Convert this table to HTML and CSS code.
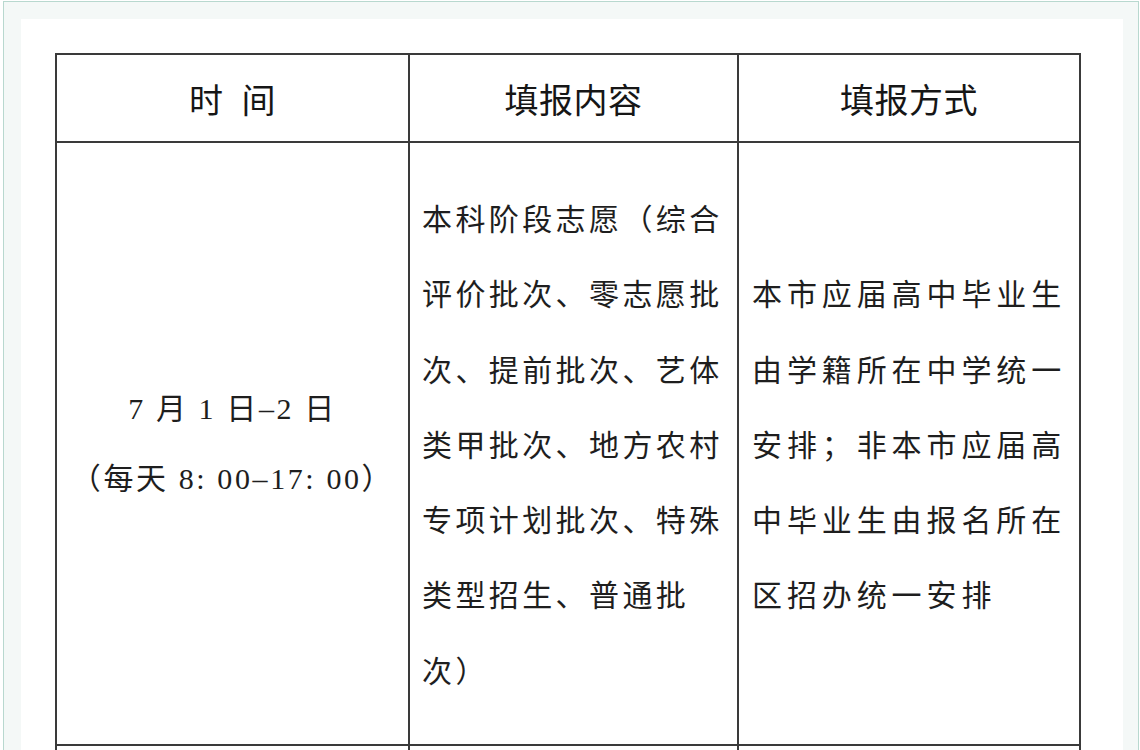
FILE: index.html
```html
<!DOCTYPE html>
<html lang="zh-CN">
<head>
<meta charset="utf-8">
<title>填报时间</title>
<link rel="stylesheet" href="styles.css">
</head>
<body>
<div class="frame">
  <div class="paper">
    <table class="sched">
      <colgroup>
        <col class="c1"><col class="c2"><col class="c3">
      </colgroup>
      <thead>
        <tr class="head">
          <th><span class="gap">时</span>间</th>
          <th>填报内容</th>
          <th>填报方式</th>
        </tr>
      </thead>
      <tbody>
        <tr class="main">
          <td class="time">
            <div class="tline">7 月 1 日–2 日</div>
            <div class="tline">（每天 8: 00–17: 00）</div>
          </td>
          <td class="content">本科阶段志愿（综合<br>评价批次、零志愿批<br>次、提前批次、艺体<br>类甲批次、地方农村<br>专项计划批次、特殊<br>类型招生、普通批<br>次）</td>
          <td class="method">本市应届高中毕业生<br>由学籍所在中学统一<br>安排；非本市应届高<br>中毕业生由报名所在<br>区招办统一安排</td>
        </tr>
        <tr class="next">
          <td></td><td></td><td></td>
        </tr>
      </tbody>
    </table>
  </div>
</div>
</body>
</html>
```

FILE: styles.css
```css
html, body {
  margin: 0;
  padding: 0;
  height: 750px;
  overflow: hidden;
  background: #ffffff;
}

.frame {
  margin: 1px 1px 0 3px;
  border: 1px solid #b8d8cf;
  border-bottom: none;
  background: #f4f8f7;
  padding: 17px 15px 0 17px;
  height: 760px;
}

.paper {
  background: #ffffff;
  padding: 34px 41px 0 34px;
  height: 740px;
}

.sched {
  border-collapse: collapse;
  table-layout: fixed;
  width: 1024px;
  color: #1c1c1c;
}

.c1 { width: 353px; }
.c2 { width: 329px; }
.c3 { width: 342px; }

.sched th,
.sched td {
  border: 2px solid #3a3a3a;
  padding: 0;
}

.head th {
  height: 86px;
  font-family: "Noto Sans CJK SC", "Noto Sans", sans-serif;
  font-weight: 400;
  font-size: 34px;
  color: #161616;
  text-align: center;
  vertical-align: middle;
  letter-spacing: 0.5px;
}

.gap {
  margin-right: 18px;
}

.main td {
  height: 597px;
  vertical-align: middle;
  font-family: "Liberation Serif", "Noto Sans CJK SC", serif;
  font-size: 30px;
  color: #1e1e1e;
}

.time {
  text-align: center;
}

.tline {
  line-height: 70px;
  letter-spacing: 2.6px;
}

.content {
  text-align: left;
  padding-left: 12px !important;
  line-height: 75.3px;
  letter-spacing: 3.4px;
  padding-top: 4px !important;
}

.method {
  text-align: left;
  padding-left: 13px !important;
  line-height: 75.3px;
  letter-spacing: 4.9px;
  padding-top: 4px !important;
}

.next td {
  height: 60px;
}
```
